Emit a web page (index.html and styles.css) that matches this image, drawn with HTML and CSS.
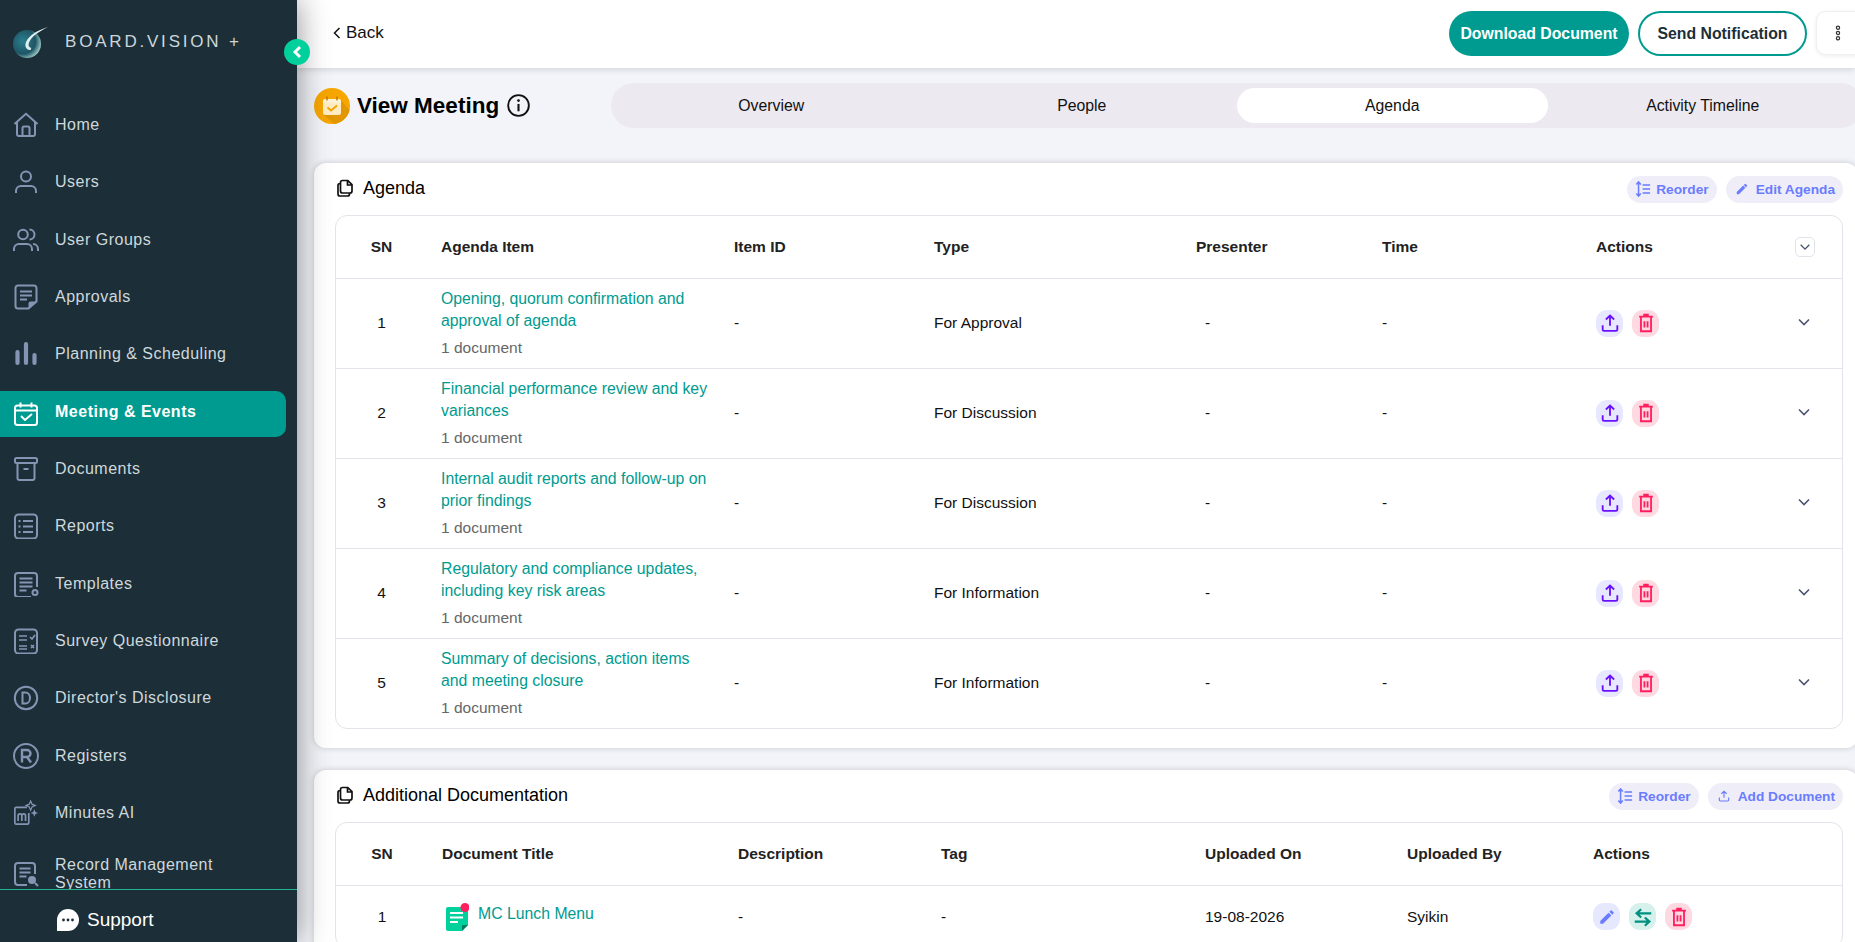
FILE: index.html
```html
<!DOCTYPE html>
<html lang="en">
<head>
<meta charset="utf-8">
<title>View Meeting</title>
<link rel="stylesheet" href="styles.css">
</head>
<body>
<svg class="defs" width="0" height="0" aria-hidden="true">
  <symbol id="i-upload" viewBox="0 0 24 24"><path d="M12 15V4M7.500 8.200 12 3.800l4.500 4.400M4 14.500V19a1.500 1.500 0 0 0 1.500 1.500h13A1.500 1.500 0 0 0 20 19v-4.500" fill="none" stroke="currentColor" stroke-width="2"/></symbol>
  <symbol id="i-trash" viewBox="0 0 24 24"><path d="M4.500 5h15M9 3h6M6.500 5.500V21h11V5.500M10.300 10v7M13.700 10v7" fill="none" stroke="currentColor" stroke-width="2"/></symbol>
  <symbol id="i-chev" viewBox="0 0 14 14"><path d="M2 4.500 7 9.500l5-5" fill="none" stroke="currentColor" stroke-width="1.600"/></symbol>
  <symbol id="i-copy" viewBox="0 0 20 20"><path d="M7.500 2.500h5.300L17 6.700v6.300a2 2 0 0 1-2 2H7.500a2 2 0 0 1-2-2v-8.500a2 2 0 0 1 2-2ZM12.500 2.500V7H17M5.500 5.500h-.5a2 2 0 0 0-2 2V16a2 2 0 0 0 2 2h7.500a2 2 0 0 0 2-2v-1" fill="none" stroke="currentColor" stroke-width="1.700"/></symbol>
  <symbol id="i-reorder" viewBox="0 0 18 18"><path d="M4 1v16M1.500 4 4 1l2.500 3M1.500 14 4 17l2.500-3" fill="none" stroke="currentColor" stroke-width="1.700"/><path d="M8.500 4.500H17M8.500 9H17M8.500 13.500H17" fill="none" stroke="currentColor" stroke-width="1.500"/></symbol>
  <symbol id="i-pencil" viewBox="0 0 24 24"><path d="M3 17.250V21h3.750L17.810 9.940l-3.750-3.750L3 17.250ZM20.710 7.040a1 1 0 0 0 0-1.410l-2.340-2.340a1 1 0 0 0-1.410 0l-1.830 1.830 3.750 3.750 1.830-1.830Z" fill="currentColor"/></symbol>
  <symbol id="i-swap" viewBox="0 0 24 24"><path d="M21 8H6M10 3.500 5 8l5 4.500M3 17h15M14 12.500 19 17l-5 4.500" fill="none" stroke="currentColor" stroke-width="2.400"/></symbol>
  <symbol id="n-home" viewBox="0 0 26 26"><path d="M1.500 12 13 1.800 24.500 12M4 10v12a2 2 0 0 0 2 2h14a2 2 0 0 0 2-2V10M9.500 24v-8a1.500 1.500 0 0 1 1.500-1.500h4a1.500 1.500 0 0 1 1.500 1.500v8" fill="none" stroke="currentColor" stroke-width="2"/></symbol>
  <symbol id="n-user" viewBox="0 0 26 26"><circle cx="13" cy="7.500" r="5" fill="none" stroke="currentColor" stroke-width="2"/><path d="M3 24v-2a5 5 0 0 1 5-5h10a5 5 0 0 1 5 5v2" fill="none" stroke="currentColor" stroke-width="2"/></symbol>
  <symbol id="n-users" viewBox="0 0 26 26"><circle cx="10" cy="7.500" r="4.800" fill="none" stroke="currentColor" stroke-width="2"/><path d="M1 24v-2a5 5 0 0 1 5-5h8a5 5 0 0 1 5 5v2M16.500 2.500a5 5 0 0 1 0 10M20 17a5 5 0 0 1 5 5v2" fill="none" stroke="currentColor" stroke-width="2"/></symbol>
  <symbol id="n-note" viewBox="0 0 26 26"><path d="M5 1.500h16a2.500 2.500 0 0 1 2.500 2.500v13.500l-8 7H5A2.500 2.500 0 0 1 2.500 22V4A2.500 2.500 0 0 1 5 1.500ZM7 7.500h12M7 11.500h12M7 15.500h7" fill="none" stroke="currentColor" stroke-width="2"/><path d="M23.500 17.500h-6a2 2 0 0 0-2 2v5Z" fill="currentColor"/></symbol>
  <symbol id="n-bars" viewBox="0 0 26 26"><path d="M4.500 11v11M13 3v19M21.500 14v8" fill="none" stroke="currentColor" stroke-width="4.200" stroke-linecap="round"/></symbol>
  <symbol id="n-cal" viewBox="0 0 26 26"><rect x="2" y="4.500" width="22" height="19.500" rx="2.500" fill="none" stroke="currentColor" stroke-width="2"/><path d="M2 9.500h22M7.500 1.500v5M18.500 1.500v5M8 15l4 4 7-6" fill="none" stroke="currentColor" stroke-width="2"/></symbol>
  <symbol id="n-box" viewBox="0 0 26 26"><rect x="2" y="2" width="22" height="5" rx="1.500" fill="none" stroke="currentColor" stroke-width="2"/><path d="M4.500 7v15a2 2 0 0 0 2 2h13a2 2 0 0 0 2-2V7M10.500 13h5" fill="none" stroke="currentColor" stroke-width="2"/></symbol>
  <symbol id="n-list" viewBox="0 0 26 26"><rect x="2" y="1.500" width="22" height="24" rx="3.500" fill="none" stroke="currentColor" stroke-width="2"/><path d="M10 8h10M10 13.500h10M10 19h10M5.500 8h2M5.500 13.500h2M5.500 19h2" fill="none" stroke="currentColor" stroke-width="2"/></symbol>
  <symbol id="n-tpl" viewBox="0 0 26 26"><path d="M24 16V5a3 3 0 0 0-3-3H5a3 3 0 0 0-3 3v18a3 3 0 0 0 3 3h13M6.500 7.500h13M6.500 11.500h13M6.500 15.500h13M6.500 19.500h7" fill="none" stroke="currentColor" stroke-width="2"/><circle cx="22" cy="21.500" r="2.500" fill="none" stroke="currentColor" stroke-width="2"/></symbol>
  <symbol id="n-survey" viewBox="0 0 26 26"><rect x="2" y="1.500" width="22" height="24" rx="3.500" fill="none" stroke="currentColor" stroke-width="2"/><path d="M6 8h8M6 12h8M6 18h8M6 21h8M17 9l2 2 3-4M18 17l3 3M21 17l-3 3" fill="none" stroke="currentColor" stroke-width="1.700"/></symbol>
  <symbol id="n-d" viewBox="0 0 26 26"><circle cx="13" cy="13" r="11.200" fill="none" stroke="currentColor" stroke-width="2"/><path d="M9.500 7.500v11h3a4.500 5.500 0 0 0 0-11Z" fill="none" stroke="currentColor" stroke-width="2"/></symbol>
  <symbol id="n-r" viewBox="0 0 26 26"><circle cx="13" cy="13" r="12" fill="none" stroke="currentColor" stroke-width="2"/><path d="M9 19.500V7h5a3.500 3.500 0 0 1 0 7H9M14 14l4 5.500" fill="none" stroke="currentColor" stroke-width="2.400"/></symbol>
  <symbol id="n-ai" viewBox="0 0 28 28"><path d="M15 8H3.500A1.500 1.500 0 0 0 2 9.500v15A1.500 1.500 0 0 0 3.500 26h12a1.500 1.500 0 0 0 1.500-1.500V14" fill="none" stroke="currentColor" stroke-width="1.800"/><path d="M5.500 22.500v-7M5.500 17a2 2 0 0 1 4 0v5.500M9.500 17a2 2 0 0 1 4 0v5.500" fill="none" stroke="currentColor" stroke-width="1.800"/><path d="M19 1l1.500 3.500L24 6l-3.500 1.500L19 11l-1.500-3.500L14 6l3.500-1.500Z" fill="none" stroke="currentColor" stroke-width="1.300"/><path d="M23 10l1.200 2.800 2.800 1.200-2.800 1.200L23 18l-1.200-2.800L19 14l2.800-1.200Z" fill="currentColor"/></symbol>
  <symbol id="n-rec" viewBox="0 0 26 26"><path d="M22 13V5a3 3 0 0 0-3-3H5a3 3 0 0 0-3 3v16a3 3 0 0 0 3 3h9M6.500 7.500h11M6.500 11.500h11M6.500 15.500h7" fill="none" stroke="currentColor" stroke-width="2"/><circle cx="19" cy="19" r="4" fill="currentColor"/><path d="M22 22l3 3" stroke="currentColor" stroke-width="2"/></symbol>
</svg>

<div class="app">
  <aside class="sidebar">
    <button class="collapse" type="button" aria-label="Collapse">
      <svg class="collapse-icon" viewBox="0 0 12 14"><path d="M9 2 4 7l5 5" fill="none" stroke="currentColor" stroke-width="3"/></svg>
    </button>
    <div class="brand">
      <svg class="brand-logo" viewBox="0 0 36 32">
        <defs><radialGradient id="lg" cx="35%" cy="40%" r="70%"><stop offset="0" stop-color="#2a7f8e"/><stop offset=".65" stop-color="#1f5565"/><stop offset="1" stop-color="#a9d8d2"/></radialGradient></defs>
        <circle cx="15" cy="17" r="14" fill="url(#lg)"/>
        <path d="M36 0C26 3 17 8 14 15c-1.500 4 0 7 3 8 2 .5 3-1 1.500-2.500-2-.5-2.500-3-1-6C20 9 28 4 36 0Z" fill="#dfeeee"/>
      </svg>
      <span class="brand-name">BOARD.VISION +</span>
    </div>
    <nav class="nav">
      <a class="nav-item"><svg class="nav-icon"><use href="#n-home"/></svg><span class="nav-label">Home</span></a>
      <a class="nav-item"><svg class="nav-icon"><use href="#n-user"/></svg><span class="nav-label">Users</span></a>
      <a class="nav-item"><svg class="nav-icon"><use href="#n-users"/></svg><span class="nav-label">User Groups</span></a>
      <a class="nav-item"><svg class="nav-icon"><use href="#n-note"/></svg><span class="nav-label">Approvals</span></a>
      <a class="nav-item"><svg class="nav-icon"><use href="#n-bars"/></svg><span class="nav-label">Planning &amp; Scheduling</span></a>
      <a class="nav-item active"><svg class="nav-icon"><use href="#n-cal"/></svg><span class="nav-label">Meeting &amp; Events</span></a>
      <a class="nav-item"><svg class="nav-icon"><use href="#n-box"/></svg><span class="nav-label">Documents</span></a>
      <a class="nav-item"><svg class="nav-icon"><use href="#n-list"/></svg><span class="nav-label">Reports</span></a>
      <a class="nav-item"><svg class="nav-icon"><use href="#n-tpl"/></svg><span class="nav-label">Templates</span></a>
      <a class="nav-item"><svg class="nav-icon"><use href="#n-survey"/></svg><span class="nav-label">Survey Questionnaire</span></a>
      <a class="nav-item"><svg class="nav-icon"><use href="#n-d"/></svg><span class="nav-label">Director's Disclosure</span></a>
      <a class="nav-item"><svg class="nav-icon"><use href="#n-r"/></svg><span class="nav-label">Registers</span></a>
      <a class="nav-item"><svg class="nav-icon"><use href="#n-ai"/></svg><span class="nav-label">Minutes AI</span></a>
      <a class="nav-item nav-item-two"><svg class="nav-icon"><use href="#n-rec"/></svg><span class="nav-label">Record Management System</span></a>
    </nav>
    <div class="support">
      <svg class="support-icon" viewBox="0 0 24 24"><path d="M12 1a11 11 0 0 1 0 22H1V12A11 11 0 0 1 12 1Z" fill="#fff"/><circle cx="7.500" cy="12" r="1.400" fill="#1c2f38"/><circle cx="12" cy="12" r="1.400" fill="#1c2f38"/><circle cx="16.500" cy="12" r="1.400" fill="#1c2f38"/></svg>
      <span>Support</span>
    </div>
  </aside>

  <main class="main">
    <header class="topbar">
      <a class="back"><svg class="back-icon" viewBox="0 0 8 14"><path d="M6.500 2 1.500 7l5 5" fill="none" stroke="currentColor" stroke-width="1.500"/></svg>Back</a>
      <div class="top-actions">
        <button class="btn btn-solid" type="button">Download Document</button>
        <button class="btn btn-outline" type="button">Send Notification</button>
        <button class="btn-more" type="button" aria-label="More">
          <svg class="more-icon" viewBox="0 0 6 18"><circle cx="3" cy="3" r="1.800" fill="none" stroke="currentColor" stroke-width="1.400"/><circle cx="3" cy="9" r="1.800" fill="none" stroke="currentColor" stroke-width="1.400"/><circle cx="3" cy="15" r="1.800" fill="none" stroke="currentColor" stroke-width="1.400"/></svg>
        </button>
      </div>
    </header>

    <div class="content">
      <div class="title-row">
        <div class="page-title">
          <svg class="title-badge" viewBox="0 0 36 36">
            <circle cx="18" cy="18" r="18" fill="#f7a600"/>
            <path d="M26 11 35.500 22A18 18 0 0 1 20 35.900L9 26Z" fill="#e29700"/>
            <rect x="9" y="11" width="18" height="16" rx="2.500" fill="#ffecc2"/>
            <path d="M9 15v-1.500A2.500 2.500 0 0 1 11.500 11h13a2.500 2.500 0 0 1 2.500 2.500V15Z" fill="#fff3d6"/>
            <path d="M13 8.500v4M23 8.500v4" stroke="#b97a00" stroke-width="1.400"/>
            <path d="M13.500 19.500l3.500 3 6-5" fill="none" stroke="#f7a600" stroke-width="2"/>
          </svg>
          <h1 class="page-heading">View Meeting</h1>
          <svg class="info-icon" viewBox="0 0 22 22"><circle cx="11" cy="11" r="9.900" fill="none" stroke="currentColor" stroke-width="1.800"/><path d="M11 9.500v7" stroke="currentColor" stroke-width="2"/><circle cx="11" cy="6.300" r="1.300" fill="currentColor"/></svg>
        </div>
        <div class="tabs">
          <span class="tab">Overview</span>
          <span class="tab">People</span>
          <span class="tab tab-active">Agenda</span>
          <span class="tab">Activity Timeline</span>
        </div>
      </div>

      <section class="card">
        <div class="card-head">
          <h2 class="card-title"><svg class="card-icon"><use href="#i-copy"/></svg>Agenda</h2>
          <div class="pills">
            <span class="pill"><svg class="pill-icon"><use href="#i-reorder"/></svg>Reorder</span>
            <span class="pill pill-wide"><svg class="pill-icon-sm"><use href="#i-pencil"/></svg>Edit Agenda</span>
          </div>
        </div>
        <div class="table-wrap">
          <table class="table agenda">
            <colgroup><col class="a1"><col class="a2"><col class="a3"><col class="a4"><col class="a5"><col class="a6"><col class="a7"><col class="a8"></colgroup>
            <thead>
              <tr><th class="sn">SN</th><th>Agenda Item</th><th>Item ID</th><th>Type</th><th>Presenter</th><th>Time</th><th>Actions</th><th><span class="head-toggle"><svg class="chev-sm"><use href="#i-chev"/></svg></span></th></tr>
            </thead>
            <tbody>
              <tr><td class="sn">1</td><td><a class="link">Opening, quorum confirmation and approval of agenda</a><div class="doc-count">1 document</div></td><td>-</td><td>For Approval</td><td class="dash-p">-</td><td>-</td><td><div class="acts"><span class="act act-up"><svg class="act-icon"><use href="#i-upload"/></svg></span><span class="act act-del"><svg class="act-icon"><use href="#i-trash"/></svg></span></div></td><td><svg class="chev"><use href="#i-chev"/></svg></td></tr>
              <tr><td class="sn">2</td><td><a class="link">Financial performance review and key variances</a><div class="doc-count">1 document</div></td><td>-</td><td>For Discussion</td><td class="dash-p">-</td><td>-</td><td><div class="acts"><span class="act act-up"><svg class="act-icon"><use href="#i-upload"/></svg></span><span class="act act-del"><svg class="act-icon"><use href="#i-trash"/></svg></span></div></td><td><svg class="chev"><use href="#i-chev"/></svg></td></tr>
              <tr><td class="sn">3</td><td><a class="link">Internal audit reports and follow-up on prior findings</a><div class="doc-count">1 document</div></td><td>-</td><td>For Discussion</td><td class="dash-p">-</td><td>-</td><td><div class="acts"><span class="act act-up"><svg class="act-icon"><use href="#i-upload"/></svg></span><span class="act act-del"><svg class="act-icon"><use href="#i-trash"/></svg></span></div></td><td><svg class="chev"><use href="#i-chev"/></svg></td></tr>
              <tr><td class="sn">4</td><td><a class="link">Regulatory and compliance updates, including key risk areas</a><div class="doc-count">1 document</div></td><td>-</td><td>For Information</td><td class="dash-p">-</td><td>-</td><td><div class="acts"><span class="act act-up"><svg class="act-icon"><use href="#i-upload"/></svg></span><span class="act act-del"><svg class="act-icon"><use href="#i-trash"/></svg></span></div></td><td><svg class="chev"><use href="#i-chev"/></svg></td></tr>
              <tr><td class="sn">5</td><td><a class="link">Summary of decisions, action items and meeting closure</a><div class="doc-count">1 document</div></td><td>-</td><td>For Information</td><td class="dash-p">-</td><td>-</td><td><div class="acts"><span class="act act-up"><svg class="act-icon"><use href="#i-upload"/></svg></span><span class="act act-del"><svg class="act-icon"><use href="#i-trash"/></svg></span></div></td><td><svg class="chev"><use href="#i-chev"/></svg></td></tr>
            </tbody>
          </table>
        </div>
      </section>

      <section class="card">
        <div class="card-head">
          <h2 class="card-title"><svg class="card-icon"><use href="#i-copy"/></svg>Additional Documentation</h2>
          <div class="pills">
            <span class="pill"><svg class="pill-icon"><use href="#i-reorder"/></svg>Reorder</span>
            <span class="pill pill-wide"><svg class="pill-icon-sm"><use href="#i-upload"/></svg>Add Document</span>
          </div>
        </div>
        <div class="table-wrap">
          <table class="table docs">
            <colgroup><col class="d1"><col class="d2"><col class="d3"><col class="d4"><col class="d5"><col class="d6"><col class="d7"></colgroup>
            <thead>
              <tr><th class="sn">SN</th><th>Document Title</th><th>Description</th><th>Tag</th><th>Uploaded On</th><th>Uploaded By</th><th>Actions</th></tr>
            </thead>
            <tbody>
              <tr>
                <td class="sn">1</td>
                <td><div class="doc-title">
                  <svg class="doc-icon" viewBox="0 0 24 28">
                    <path d="M3 4h18a2 2 0 0 1 2 2v16l-6 6H3a2 2 0 0 1-2-2V6a2 2 0 0 1 2-2Z" fill="#00d09c"/>
                    <path d="M23 22h-5a1 1 0 0 0-1 1v5Z" fill="#067a5f"/>
                    <path d="M5 10h13M5 14.500h13M5 19h8" stroke="#fff" stroke-width="1.800"/>
                    <circle cx="20" cy="4.500" r="4.500" fill="#ff1f5f"/>
                  </svg>
                  <a class="link link-raised">MC Lunch Menu</a></div></td>
                <td>-</td><td>-</td><td>19-08-2026</td><td>Syikin</td>
                <td><div class="acts"><span class="act act-edit"><svg class="act-icon-sm"><use href="#i-pencil"/></svg></span><span class="act act-swap"><svg class="act-icon"><use href="#i-swap"/></svg></span><span class="act act-del"><svg class="act-icon"><use href="#i-trash"/></svg></span></div></td>
              </tr>
            </tbody>
          </table>
        </div>
      </section>
    </div>
  </main>
</div>
</body>
</html>
```

FILE: styles.css
```css
* { box-sizing: border-box; }
html, body { margin: 0; height: 100%; overflow: hidden; }
body { font-family: "Liberation Sans", Arial, sans-serif; color: #111; background: #f3f4f9; }
.defs { position: absolute; }
.app { display: flex; height: 942px; overflow: hidden; }

/* Sidebar */
.sidebar { position: relative; z-index: 5; flex: 0 0 297px; display: flex; flex-direction: column; background: #1c2f38; box-shadow: 0 0 30px rgba(0, 0, 0, .45); }
.collapse { position: absolute; left: 284px; top: 39px; width: 26px; height: 26px; padding: 0; border: 0; border-radius: 50%; background: #00d09c; color: #fff; display: flex; align-items: center; justify-content: center; }
.collapse-icon { width: 12px; height: 14px; }
.brand { flex: 0 0 102px; display: flex; align-items: flex-start; padding: 27px 0 0 12px; }
.brand-logo { width: 36px; height: 32px; }
.brand-name { margin: 5px 0 0 17px; font-size: 17px; letter-spacing: 2.800px; color: #ccd6dc; white-space: nowrap; }
.nav { flex: 1 1 0; min-height: 0; overflow: hidden; display: flex; flex-direction: column; gap: 11.350px; }
.nav-item { flex: 0 0 46px; width: 286px; display: flex; align-items: center; gap: 16px; padding-left: 13px; border-radius: 0 10px 10px 0; color: #cfd8dc; font-size: 16px; letter-spacing: .5px; }
.nav-icon { flex: 0 0 26px; width: 26px; height: 26px; color: #8793b3; }
.nav-label { max-width: 200px; line-height: 18px; }
.nav-item.active { margin: 2px 0 -2px; padding-bottom: 4px; background: #009b90; color: #fff; font-weight: 700; }
.nav-item.active .nav-icon { color: #fff; margin-top: 4px; }
.nav-item-two { padding-top: 8px; }
.support { flex: 0 0 53px; display: flex; align-items: center; gap: 7px; padding: 8px 0 0 56px; border-top: 1px solid #23b193; color: #fff; font-size: 19px; }
.support-icon { width: 24px; height: 24px; }

/* Main */
.main { flex: 1 1 0; min-width: 0; display: flex; flex-direction: column; overflow: hidden; }
.topbar { position: relative; z-index: 2; flex: 0 0 68px; display: flex; align-items: center; justify-content: space-between; padding: 0 0 0 36px; background: #fff; box-shadow: 0 2px 6px rgba(0, 0, 0, .12); }
.back { display: flex; align-items: center; gap: 5px; font-size: 17px; margin-top: -3px; color: #111; }
.back-icon { width: 8px; height: 14px; }
.top-actions { display: flex; align-items: center; gap: 9px; margin-right: -22px; margin-top: -2px; }
.btn { height: 45px; padding-top: 1px !important; border-radius: 23px; font: 700 15.800px "Liberation Sans", Arial, sans-serif; }
.btn-solid { width: 180px; padding: 0; border: 0; background: #009b90; color: #fff; }
.btn-outline { width: 169px; padding: 0; border: 2px solid #009b90; background: #fff; color: #1c2f38; }
.btn-more { width: 61px; height: 44px; padding: 0 17px 0 0; border: 1px solid #eef0f3; border-radius: 10px; background: #fff; color: #333; box-shadow: 0 1px 4px rgba(0, 0, 0, .08); display: flex; align-items: center; justify-content: center; }
.more-icon { flex: none; width: 6px; height: 16px; }

.content { flex: 1 1 0; min-height: 0; padding: 15px 0 0 17px; margin-right: -3px; display: flex; flex-direction: column; }
.title-row { flex: none; display: flex; align-items: center; height: 45px; margin-bottom: 35px; margin-right: -5px; }
.page-title { flex: 0 0 297px; display: flex; align-items: center; }
.title-badge { width: 36px; height: 36px; }
.page-heading { margin: 0 0 0 7px; font-size: 22.500px; font-weight: 700; color: #000; }
.info-icon { width: 23px; height: 23px; margin-left: 8px; color: #111; }
.tabs { flex: 1 1 0; height: 45px; display: grid; grid-template-columns: repeat(4, 1fr); padding: 5px; border-radius: 23px; background: #ece9f0; }
.tab { display: flex; align-items: center; justify-content: center; border-radius: 18px; font-size: 15.800px; color: #111; }
.tab-active { background: #fff; }

/* Cards */
.card { flex: none; padding: 0 15px 19px 21px; margin-bottom: 22px; border-radius: 12px; background: #fff; box-shadow: 0 0 6px rgba(0, 0, 0, .18); }
.card-head { height: 52px; display: flex; align-items: center; justify-content: space-between; }
.card-title { display: flex; align-items: center; gap: 8px; margin: -2px 0 0; font-size: 18px; font-weight: 400; color: #000; }
.card-icon { width: 20px; height: 20px; color: #111; }
.pills { display: flex; gap: 9px; }
.pill { height: 27px; display: flex; align-items: center; gap: 5px; padding: 0 8px; border-radius: 14px; background: #efeef8; color: #6a7cff; font-size: 13.700px; font-weight: 700; }
.pill-wide { gap: 7px; padding-left: 9px; }
.pill-icon { width: 16px; height: 16px; }
.pill-icon-sm { width: 14px; height: 14px; }

/* Tables */
.table-wrap { border: 1px solid #e2e4ea; border-radius: 12px; overflow: hidden; }
.table { width: 100%; table-layout: fixed; border-collapse: collapse; font-size: 15.500px; color: #111; }
.table th { height: 62px; padding: 0; text-align: left; font-size: 15.500px; font-weight: 700; color: #222; }
.table td { height: 90px; padding: 0; vertical-align: middle; }
.docs td { height: 62px; padding-top: 1px; }
.table tbody tr { border-top: 1px solid #e2e4ea; }
.table .sn { padding-right: 14px; text-align: center; }
.a1 { width: 105px; } .a2 { width: 293px; } .a3 { width: 200px; } .a4 { width: 262px; } .a5 { width: 186px; } .a6 { width: 214px; } .a7 { width: 200px; }
.d1 { width: 106px; } .d2 { width: 296px; } .d3 { width: 203px; } .d4 { width: 264px; } .d5 { width: 202px; } .d6 { width: 186px; }
.dash-p { padding-left: 9px !important; }
.link { display: block; color: #009b90; font-size: 15.800px; line-height: 22.500px; max-width: 270px; }
.link-raised { margin-top: -6px; }
.doc-count { margin: 5px 0 1px; color: #666; line-height: 20px; }
.doc-title { display: flex; align-items: center; gap: 9px; padding-left: 3px; }
.doc-icon { width: 24px; height: 28px; }
.head-toggle { display: flex; align-items: center; justify-content: center; width: 20px; height: 20px; margin-left: -1px; border: 1px solid #dfe3ea; border-radius: 5px; color: #4c5570; }
.chev-sm { width: 12px; height: 12px; }
.chev { display: block; width: 14px; height: 14px; margin: -2px 0 0 1px; color: #4c5570; }
.acts { display: flex; gap: 9px; }
.act { width: 27px; height: 27px; display: flex; align-items: center; justify-content: center; border-radius: 11px; }
.act-icon { width: 22px; height: 22px; }
.act-icon-sm { width: 18px; height: 18px; }
.act-up { background: #e7e8ff; color: #6a10ff; }
.act-del { background: #ffd9e2; color: #ff1f5f; }
.act-edit { background: #e6e8ff; color: #6a7cff; }
.act-swap { background: #d6f0ec; color: #009080; }
```
